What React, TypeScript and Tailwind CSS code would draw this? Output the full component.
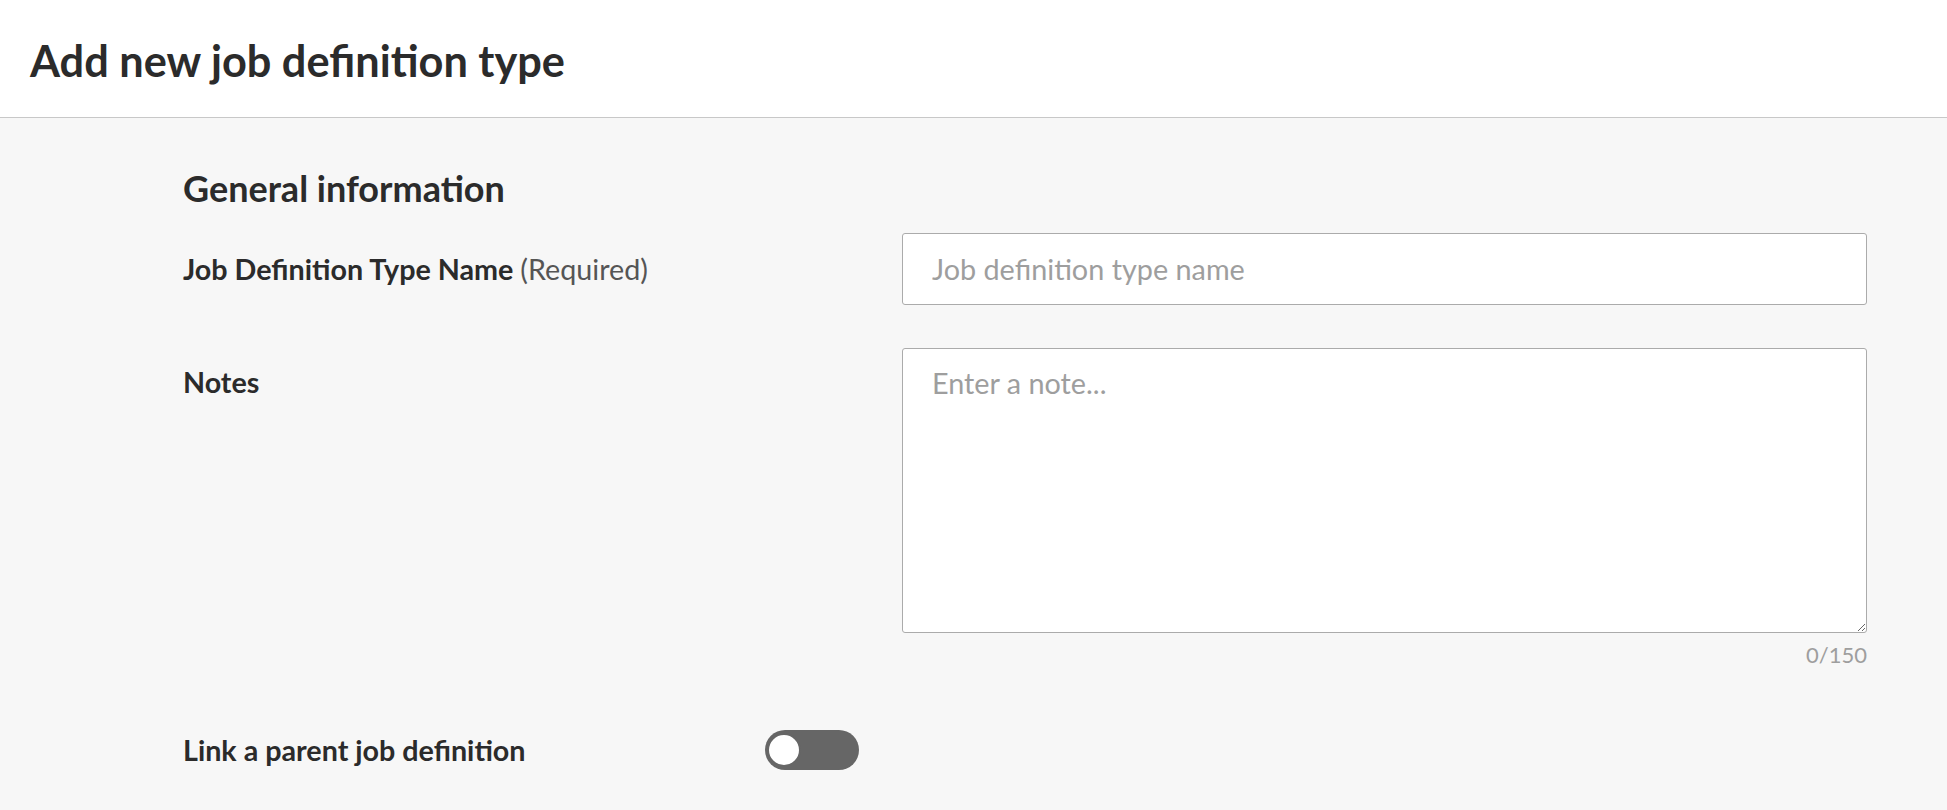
import { useState } from "react";

export default function App() {
  const [linkParent, setLinkParent] = useState(false);
  const [notes, setNotes] = useState("");

  return (
    <div className="min-h-screen bg-[#f7f7f7] font-['Lato',sans-serif] text-[#2b2b2b]">
      <header className="h-[118px] bg-white border-b border-[#c8c8c8] flex items-center px-[30px]">
        <h1 className="text-[43.3px] font-bold leading-none mt-[4px]">Add new job definition type</h1>
      </header>

      <main className="pl-[183px] pr-[80px] pt-[52px]">
        <h2 className="text-[36px] font-bold leading-none mb-[27px]">General information</h2>

        <div className="grid grid-cols-[719px_1fr]">
          <label className="text-[28.7px] font-bold pt-[22px] leading-none">
            Job Definition Type Name <span className="font-normal text-[#555]">(Required)</span>
          </label>
          <input
            placeholder="Job definition type name"
            className="h-[72px] w-full bg-white border border-[#ababab] rounded-[3px] px-[29px] text-[28.8px] placeholder:text-[#9e9e9e] outline-none"
          />

          <label className="text-[28.7px] font-bold pt-[20px] mt-[43px] leading-none">Notes</label>
          <div className="mt-[43px]">
            <textarea
              value={notes}
              onChange={(e) => setNotes(e.target.value.slice(0, 150))}
              placeholder="Enter a note..."
              className="block h-[285px] w-full bg-white border border-[#ababab] rounded-[3px] px-[29px] py-[13px] text-[28.8px] leading-[1.5] placeholder:text-[#9e9e9e] outline-none"
            />
            <div className="text-right text-[22px] leading-[26px] text-[#9e9e9e] mt-[9px]">{notes.length}/150</div>
          </div>
        </div>

        <div className="flex items-center mt-[62px]">
          <span className="w-[582px] text-[28.7px] font-bold leading-none">Link a parent job definition</span>
          <button
            onClick={() => setLinkParent(!linkParent)}
            className="relative w-[94px] h-[40px] rounded-full bg-[#666666]"
          >
            <span
              className={`absolute top-[3px] w-[34px] h-[34px] rounded-full bg-white border-2 border-[#666666] ${
                linkParent ? "left-[57px]" : "left-[2px]"
              }`}
            />
          </button>
        </div>
      </main>
    </div>
  );
}
